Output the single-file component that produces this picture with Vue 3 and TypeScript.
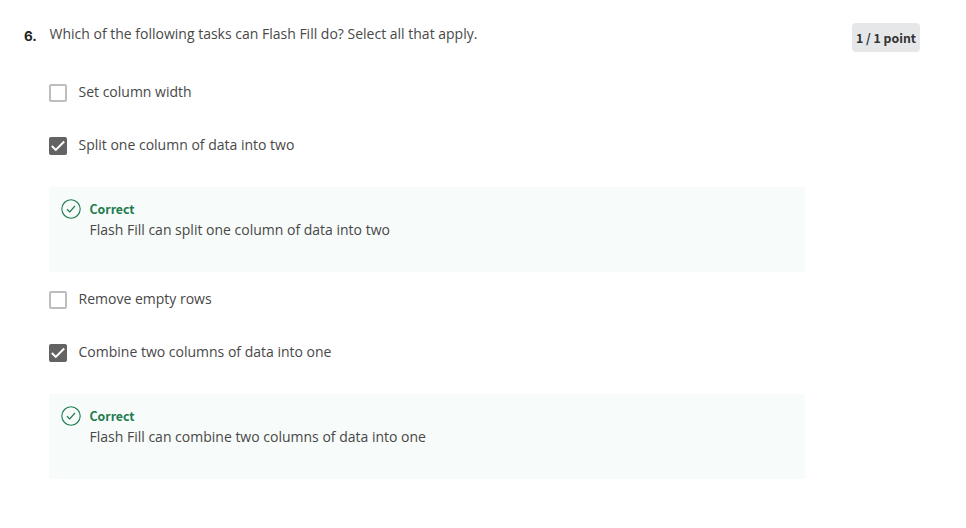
<script setup lang="ts">
interface Option {
  label: string
  checked: boolean
  feedback?: string
}

const options: Option[] = [
  { label: 'Set column width', checked: false },
  { label: 'Split one column of data into two', checked: true, feedback: 'Flash Fill can split one column of data into two' },
  { label: 'Remove empty rows', checked: false },
  { label: 'Combine two columns of data into one', checked: true, feedback: 'Flash Fill can combine two columns of data into one' },
]
</script>

<template>
  <main class="question">
    <div class="number">6.</div>
    <section class="body">
      <h2 class="prompt">Which of the following tasks can Flash Fill do? Select all that apply.</h2>
      <div v-for="option in options" :key="option.label" class="option">
        <div class="choice">
          <span class="box" :class="{ checked: option.checked }">
            <svg v-if="option.checked" width="18" height="18" viewBox="0 0 18 18">
              <path d="M2.8 9 L6.8 12.9 L15.2 4.5" fill="none" stroke="#fff" stroke-width="2" />
            </svg>
          </span>
          <span class="label">{{ option.label }}</span>
        </div>
        <div v-if="option.feedback" class="feedback">
          <svg class="tick" width="20" height="20" viewBox="0 0 20 20" fill="none" stroke="#1d7c50">
            <circle cx="10" cy="10" r="9.2" stroke-width="1.1" />
            <path d="M6 10.2 L8.8 12.9 L13.9 7" stroke-width="1.2" />
          </svg>
          <div>
            <div class="verdict">Correct</div>
            <div class="text">{{ option.feedback }}</div>
          </div>
        </div>
      </div>
    </section>
    <div class="points">1 / 1 point</div>
  </main>
</template>

<style>
body {
  background: #fff;
}
</style>

<style scoped>
.question {
  display: flex;
  align-items: flex-start;
  box-sizing: border-box;
  width: 966px;
  height: 528px;
  padding: 23px 46px 0 24px;
  font-family: "Open Sans", sans-serif;
  font-size: 14px;
  line-height: 21px;
  color: #484848;
}
.number {
  width: 25px;
  padding-top: 3px;
  font-family: Inter, sans-serif;
  font-size: 13.5px;
  font-weight: 700;
  color: #1f1f1f;
}
.body {
  width: 756px;
}
.prompt {
  margin: 0 0 37px;
  padding-left: 0.5px;
  font-size: 14px;
  font-weight: 400;
}
.choice {
  display: flex;
  align-items: flex-start;
  height: 53px;
}
.box {
  box-sizing: border-box;
  width: 18px;
  height: 18px;
  margin: 3px 11.5px 0 0;
  border: 2px solid #bdbdbd;
  border-radius: 2px;
}
.box.checked {
  border: 0;
  background: #636363;
}
.box svg {
  display: block;
}
.feedback {
  display: flex;
  box-sizing: border-box;
  height: 85px;
  margin-bottom: 16px;
  padding: 12px;
  background: #f7fbf9;
}
.tick {
  margin-right: 8.5px;
}
.verdict {
  box-sizing: border-box;
  height: 20px;
  padding-top: 1px;
  font-family: "Noto Sans CJK SC", sans-serif;
  font-size: 12.3px;
  font-weight: 700;
  color: #1d7c50;
  line-height: 19px;
}
.points {
  box-sizing: border-box;
  width: 68px;
  height: 29px;
  padding-top: 1px;
  margin-left: 47px;
  border-radius: 4px;
  background: #e5e7e8;
  font-family: "Noto Sans CJK SC", sans-serif;
  font-size: 12.3px;
  font-weight: 700;
  color: #333;
  line-height: 29px;
  text-align: center;
  white-space: nowrap;
}
</style>
